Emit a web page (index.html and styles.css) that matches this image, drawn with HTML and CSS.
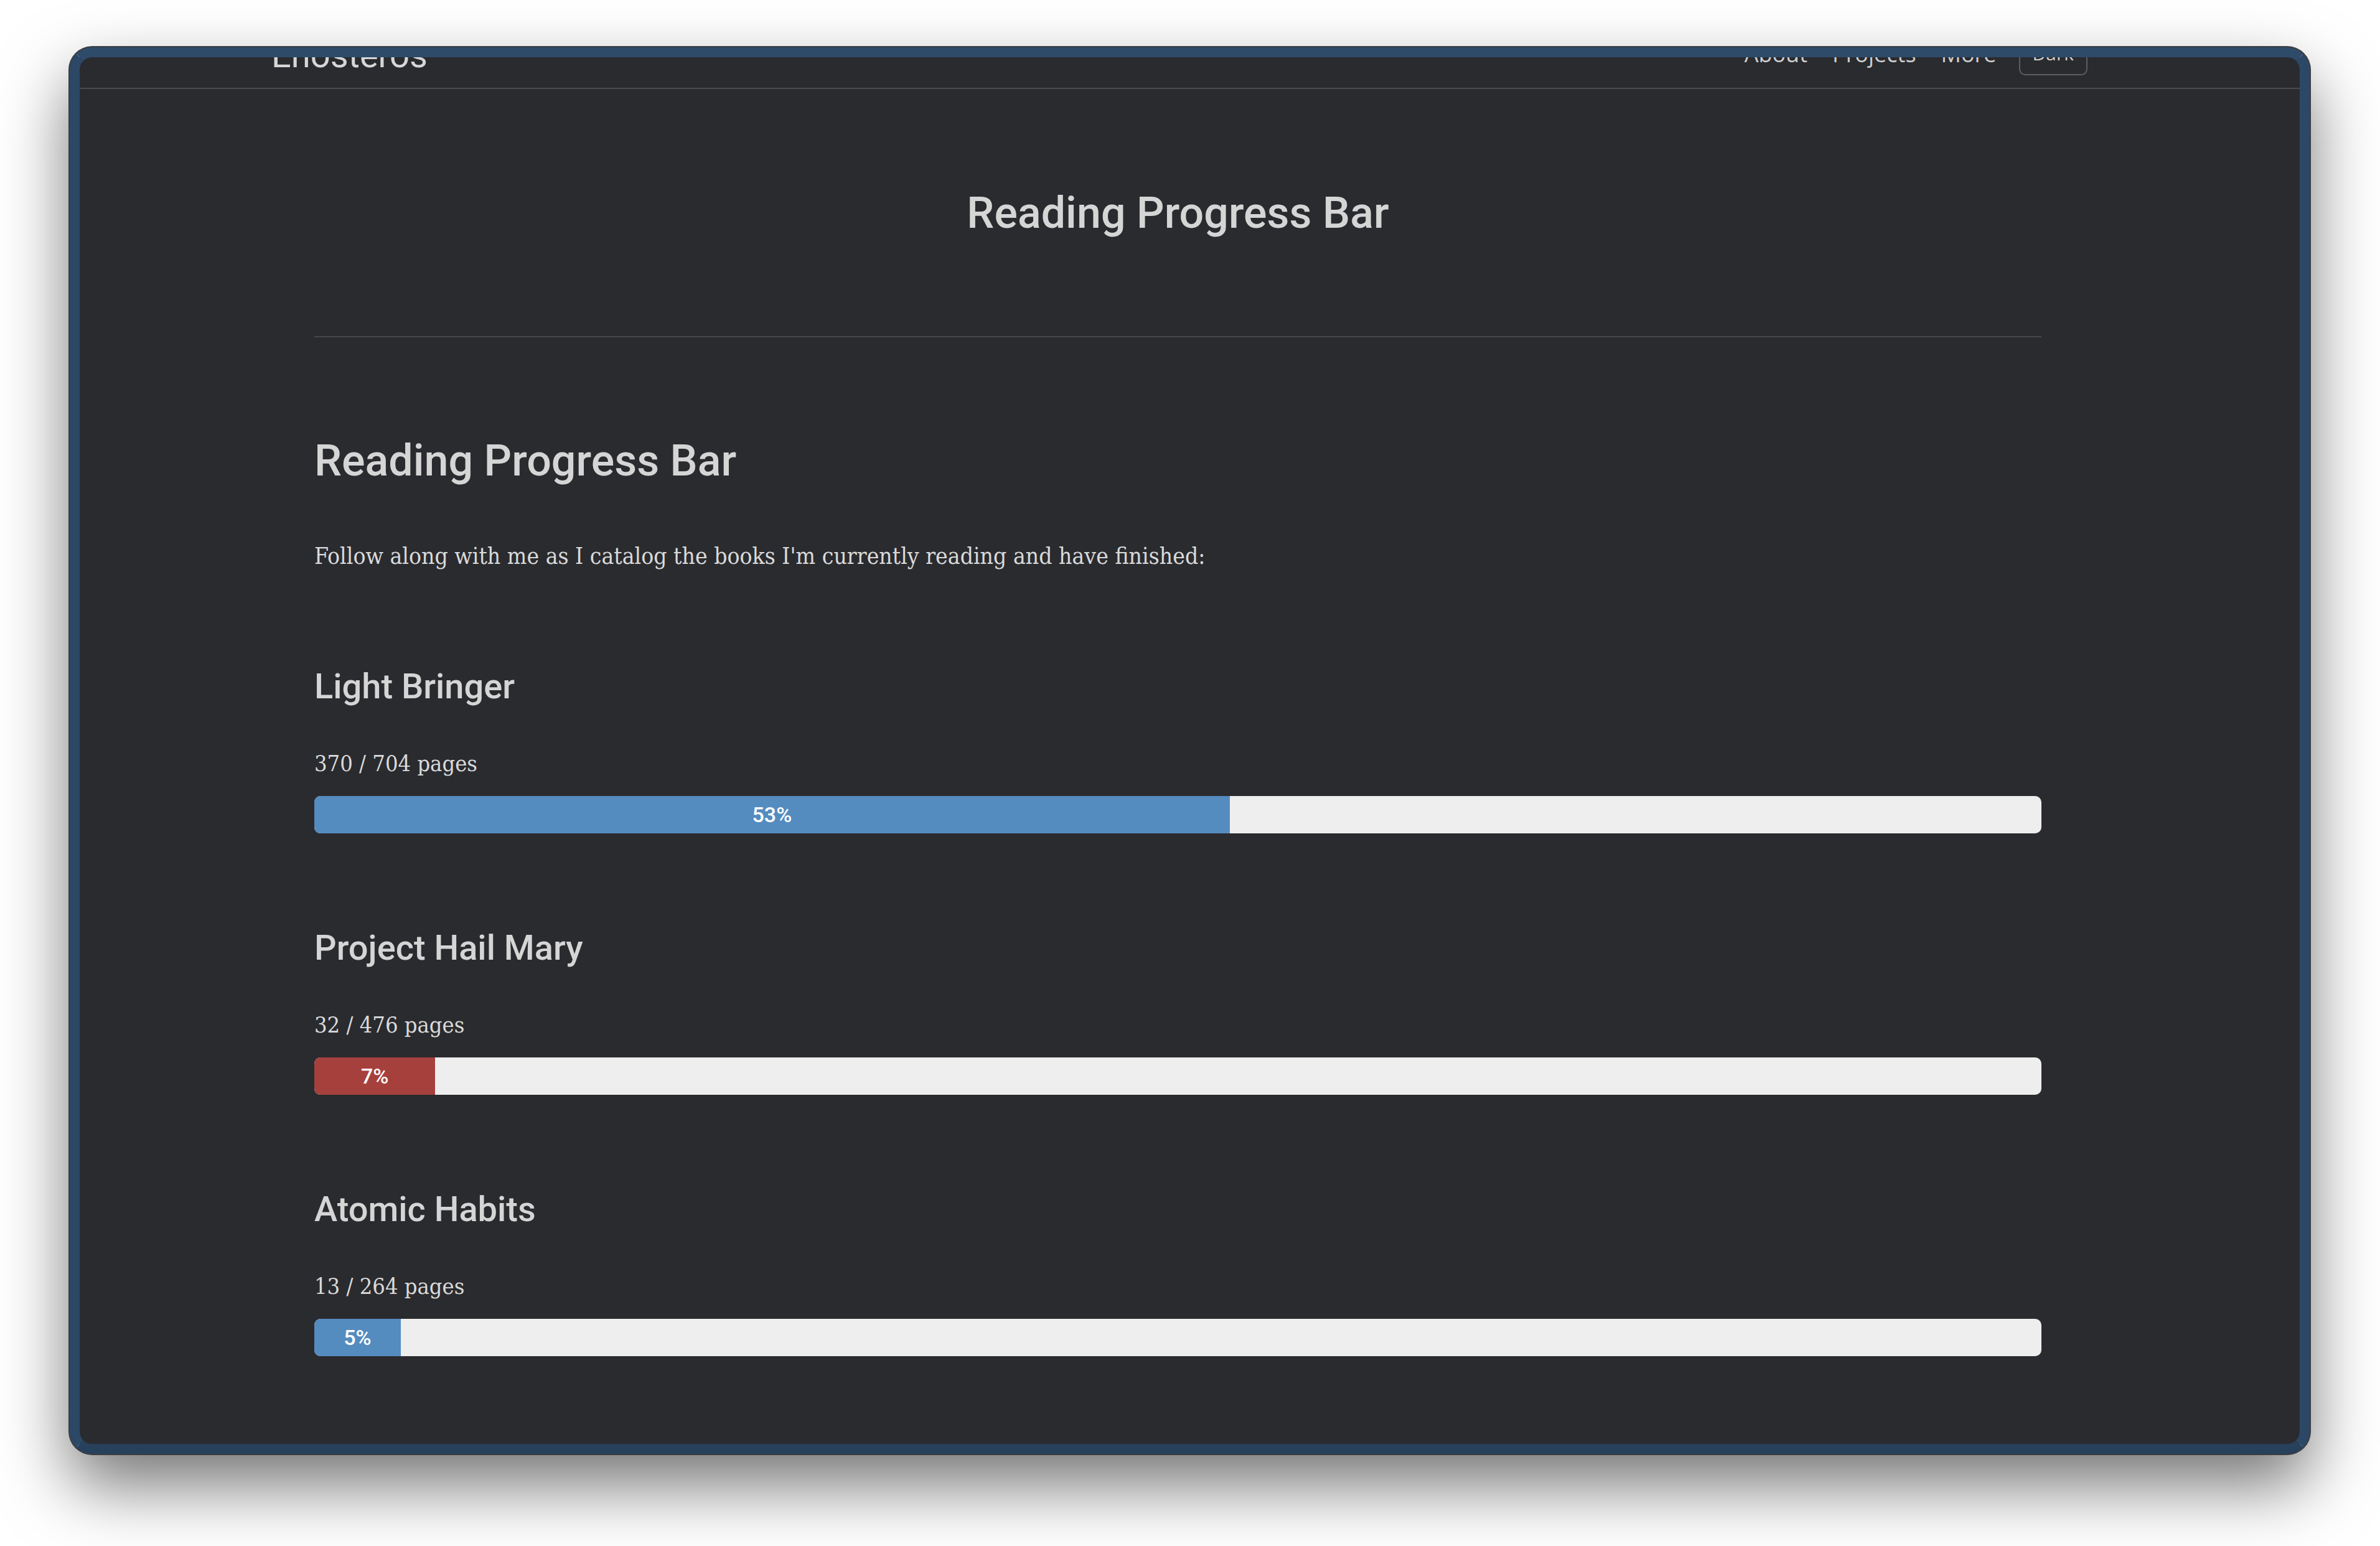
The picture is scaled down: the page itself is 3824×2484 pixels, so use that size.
FILE: index.html
```html
<!DOCTYPE html>
<html lang="en">
  <head>
    <meta charset="UTF-8" />
    <meta name="viewport" content="width=device-width, initial-scale=1.0" />
    <title>Reading Progress Bar</title>
    <link rel="stylesheet" href="styles.css">
  </head>
  <body>
    <div class="window">
      <div class="page">
        <!-- Site header (scrolled partly out of view) -->
        <header class="site-header">
          <div class="header-inner">
            <a class="logo" href="#">Enosteros</a>
            <nav class="nav">
              <a href="#">About</a>
              <a href="#">Projects</a>
              <a href="#">More</a>
              <button class="theme-btn">Dark</button>
            </nav>
          </div>
        </header>

        <main class="content">
          <h1 class="page-title">Reading Progress Bar</h1>
          <hr class="divider">

          <h2 class="post-title">Reading Progress Bar</h2>
          <p class="intro">Follow along with me as I catalog the books I'm currently reading and have finished:</p>

          <!-- Books -->
          <section class="book">
            <h3>Light Bringer</h3>
            <p class="pages">370 / 704 pages</p>
            <div class="progress">
              <div class="progress-bar blue" style="width: 53%">53%</div>
            </div>
          </section>

          <section class="book">
            <h3>Project Hail Mary</h3>
            <p class="pages">32 / 476 pages</p>
            <div class="progress">
              <div class="progress-bar red" style="width: 7%">7%</div>
            </div>
          </section>

          <section class="book">
            <h3>Atomic Habits</h3>
            <p class="pages">13 / 264 pages</p>
            <div class="progress">
              <div class="progress-bar blue" style="width: 5%">5%</div>
            </div>
          </section>
        </main>
      </div>
    </div>
  </body>
</html>
```

FILE: styles.css
```css
* {
  box-sizing: border-box;
  margin: 0;
  padding: 0;
}

body {
  width: 3824px;
  height: 2484px;
  background-color: #fff;
  overflow: hidden;
  padding: 76px 0 0 112px;
}

/* Window frame */
.window {
  width: 3599px;
  height: 2260px;
  border: 16px solid #2c4866;
  border-top-color: #2e4b6a;
  border-bottom-color: #27405b;
  border-radius: 36px;
  background-color: #2a2b2f;
  overflow: hidden;
  box-shadow: 0 0 0 2px #3b3d40, 0 50px 110px rgba(0, 0, 0, 0.55);
}

.page {
  height: 100%;
  overflow: hidden;
}

/* Header */
.site-header {
  margin-top: -61px;
  height: 112px;
  border-bottom: 2px solid #4a4b4e;
}

.header-inner {
  display: flex;
  align-items: center;
  width: 2918px;
  height: 110px;
  margin-left: 308px;
}

.logo {
  font-family: Roboto, "Liberation Sans", sans-serif;
  font-size: 56px;
  line-height: 64px;
  color: #d6d6d6;
  text-decoration: none;
  margin-top: 6px;
}

.nav {
  display: flex;
  align-items: center;
  gap: 40px;
  margin-left: auto;
}

.nav a {
  font-family: "Open Sans", "Liberation Sans", sans-serif;
  font-size: 36px;
  line-height: 49px;
  color: #cfcfcf;
  text-decoration: none;
}

.theme-btn {
  font-family: "Open Sans", "Liberation Sans", sans-serif;
  font-size: 30px;
  line-height: 40px;
  padding: 13px 20px;
  border: 2px solid #5c5e62;
  border-radius: 10px;
  background: transparent;
  color: #cfcfcf;
  margin-left: -4px;
}

/* Main column */
.content {
  width: 2775px;
  margin-left: 377px;
  color: #d5d5d5;
}

.page-title,
.post-title,
.book h3 {
  font-family: Roboto, "Liberation Sans", sans-serif;
  font-weight: 500;
}

.page-title {
  font-size: 70px;
  line-height: 88px;
  text-align: center;
  margin-top: 155px;
}

.divider {
  border: none;
  border-top: 2px solid #46474b;
  margin-top: 154px;
}

.post-title {
  font-size: 70px;
  line-height: 88px;
  margin-top: 154px;
}

.intro,
.pages {
  font-family: "DejaVu Serif Condensed", "DejaVu Serif", serif;
  font-size: 37px;
  line-height: 54px;
  color: #dadada;
}

.pages {
  font-size: 36px;
}

.intro {
  margin-top: 83px;
}

.book h3 {
  font-size: 56px;
  line-height: 64px;
  margin-top: 150px;
}

.book + .book h3 {
  margin-top: 152px;
}

.pages {
  margin-top: 65px;
}

/* Progress bars */
.progress {
  display: flex;
  height: 60px;
  margin-top: 25px;
  background-color: #eeeeee;
  border-radius: 10px;
  overflow: hidden;
}

.progress-bar {
  height: 100%;
  font-family: Roboto, "Liberation Sans", sans-serif;
  font-size: 34px;
  font-weight: 500;
  line-height: 60px;
  text-align: center;
  color: #fff;
}

.blue {
  background-color: #558cbf;
}

.red {
  background-color: #a6403d;
}
```
